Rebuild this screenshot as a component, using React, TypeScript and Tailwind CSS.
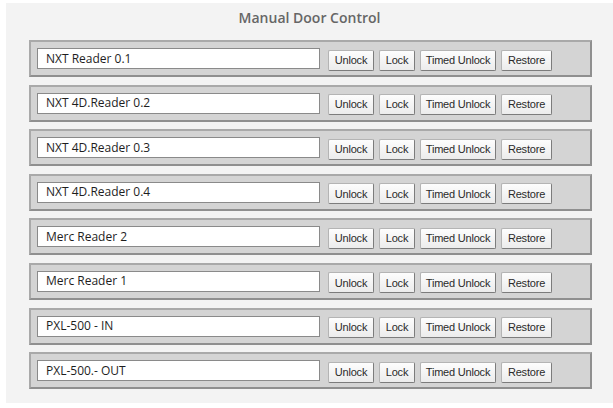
import React from "react";

// ─── Data ─────────────────────────────────────────────────────────────────────

const doors = [
  "NXT Reader 0.1",
  "NXT 4D.Reader 0.2",
  "NXT 4D.Reader 0.3",
  "NXT 4D.Reader 0.4",
  "Merc Reader 2",
  "Merc Reader 1",
  "PXL-500 - IN",
  "PXL-500.- OUT",
];

const actions = [
  { label: "Unlock", w: "w-[46px]" },
  { label: "Lock", w: "w-[36px]" },
  { label: "Timed Unlock", w: "w-[76px]" },
  { label: "Restore", w: "w-[51px]" },
];

// ─── Components ───────────────────────────────────────────────────────────────

function DoorRow({ name }: { name: string }) {
  return (
    <div className="flex h-[37px] w-[563px] items-center border-2 border-t-[#a9a9a9] border-l-[#a9a9a9] border-r-[#8f8f8f] border-b-[#8f8f8f] bg-[#d4d4d4] pl-[6px]">
      <div className="flex h-[21px] w-[283px] items-center border border-[#8a8a8a] bg-white pl-[8px] font-['Open_Sans',sans-serif] text-[12px] text-[#1e1e1e]">
        {name}
      </div>
      <div className="ml-[8px] mt-[3px] flex gap-[5px]">
        {actions.map((a) => (
          <button
            key={a.label}
            className={`${a.w} flex h-[21px] items-center justify-center rounded-[2px] border border-[#b4b4b4] border-r-[#7c7c7c] border-b-[#7c7c7c] bg-gradient-to-b from-[#fdfdfd] to-[#ececec] font-['Liberation_Sans',sans-serif] text-[11px] tracking-[-0.2px] text-[#2a2a2a]`}
          >
            {a.label}
          </button>
        ))}
      </div>
    </div>
  );
}

export default function App() {
  return (
    <div className="h-[408px] w-[613px] bg-white pl-[6px] pt-[3px]">
      <div className="flex h-[400px] w-[607px] flex-col bg-[#f3f3f3]">
        <div className="mt-[5px] text-center font-['Open_Sans',sans-serif] text-[14px] font-semibold leading-[19px] text-[#666666]">
          Manual Door Control
        </div>
        <div className="ml-[23px] mt-[13px] flex flex-col gap-[7.6px]">
          {doors.map((d) => (
            <DoorRow key={d} name={d} />
          ))}
        </div>
      </div>
    </div>
  );
}
